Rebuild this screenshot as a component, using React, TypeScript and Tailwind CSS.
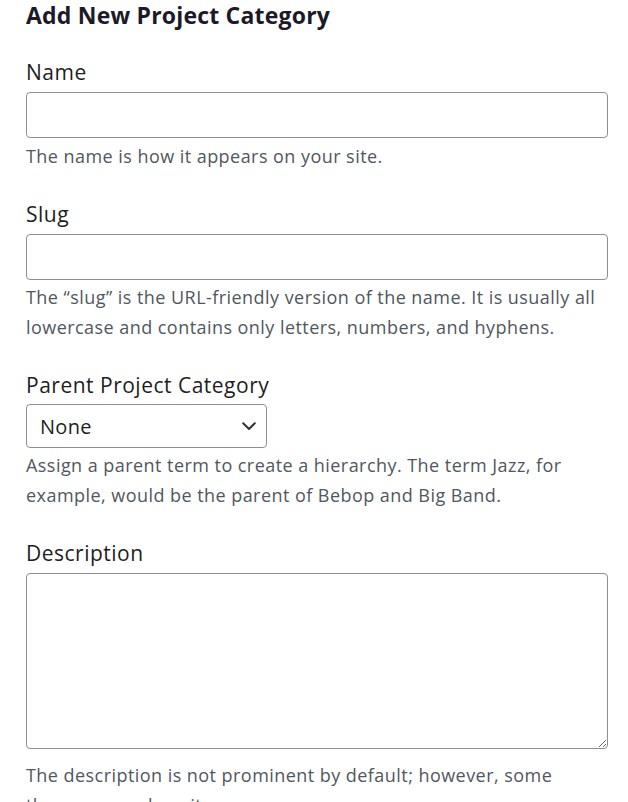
const font = { fontFamily: '"Open Sans", "Noto Sans", sans-serif' };

function Help({ children, className = '' }: { children: React.ReactNode; className?: string }) {
  return (
    <p className={`text-[18px] leading-[30px] tracking-[0.45px] text-[#50575e] ${className}`}>
      {children}
    </p>
  );
}

function Label({ children, className = '' }: { children: React.ReactNode; className?: string }) {
  return (
    <label className={`block text-[21px] leading-[28px] tracking-[0.5px] text-[#1e1e1e] ${className}`}>
      {children}
    </label>
  );
}

const fieldCls = 'block w-full rounded-[4px] border border-[#8c8f94] bg-white px-3 outline-none';

export default function App() {
  return (
    <div className="min-h-[802px] bg-white pl-[26px] pr-[20px] text-[#1e1e1e]" style={font}>
      <h2 className="text-[23px] font-bold leading-[30px] tracking-[0.2px] text-[#1c1a28]">
        Add New Project Category
      </h2>

      <Label className="mt-[28px]">Name</Label>
      <input type="text" className={`mt-[6px] h-[46px] ${fieldCls}`} />
      <Help className="mt-[3px]">The name is how it appears on your site.</Help>

      <Label className="mt-[29px]">Slug</Label>
      <input type="text" className={`mt-[6px] h-[46px] ${fieldCls}`} />
      <Help className="mt-[2px]">
        The “slug” is the URL-friendly version of the name. It is usually all lowercase and
        contains only letters, numbers, and hyphens.
      </Help>

      <Label className="mt-[29px]">Parent Project Category</Label>
      <div className="mt-[5px] flex h-[44px] w-[241px] items-center justify-between rounded-[4px] border border-[#8c8f94] pl-[13px] pr-[10px]">
        <span className="pt-[1px] text-[20px] leading-[24px] tracking-[0.3px] text-[#1e1e1e]">None</span>
        <svg width="14" height="9" viewBox="0 0 14 9" fill="none" className="text-[#2c3338]">
          <polyline
            points="1.2,1.2 7,7 12.8,1.2"
            stroke="currentColor"
            strokeWidth="2"
            strokeLinecap="round"
            strokeLinejoin="round"
          />
        </svg>
      </div>
      <Help className="mt-[2px]">
        Assign a parent term to create a hierarchy. The term Jazz, for example, would be the
        parent of Bebop and Big Band.
      </Help>

      <Label className="mt-[29px]">Description</Label>
      <textarea className={`mt-[6px] h-[176px] ${fieldCls}`} />
      <Help className="mt-[11px]">
        The description is not prominent by default; however, some themes may show it.
      </Help>
    </div>
  );
}
